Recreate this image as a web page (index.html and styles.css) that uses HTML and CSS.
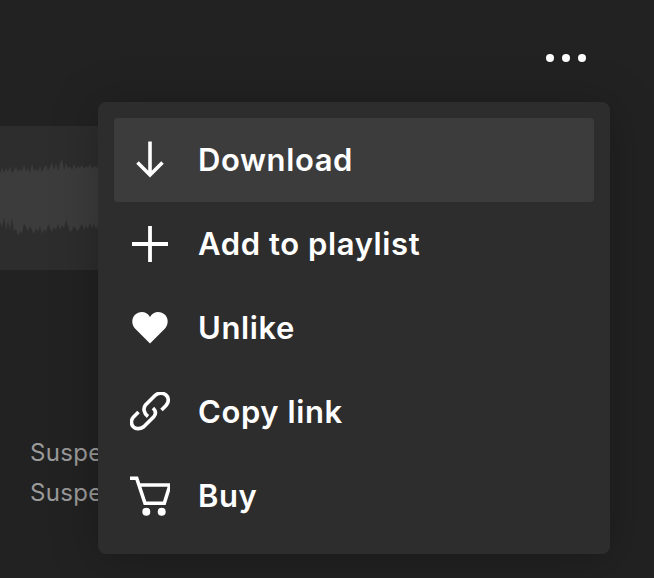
FILE: index.html
```html
<!DOCTYPE html>
<html lang="en">
<head>
<meta charset="utf-8">
<title>Track menu</title>
<link rel="stylesheet" href="styles.css">
</head>
<body>
<main class="page">
  <div class="toolbar">
    <button class="more" aria-label="More"><i class="dot"></i><i class="dot"></i><i class="dot"></i></button>
  </div>
  <div class="wave">
    <svg class="wave-svg" width="120" height="144" viewBox="0 0 120 144">
      <path fill="#3c3c3c" d="M0 48 L2 41 L4 47 L6 42 L8 46 L10 40 L12 47 L14 44 L16 41 L18 46 L20 43 L22 45 L24 39 L26 46 L28 42 L30 47 L32 38 L34 45 L36 43 L38 46 L40 40 L42 46 L44 42 L46 39 L48 45 L50 41 L52 36 L54 44 L56 37 L58 45 L60 38 L62 33 L64 44 L66 37 L68 42 L70 40 L72 44 L74 38 L76 43 L78 40 L80 42 L82 39 L84 43 L86 40 L88 42 L90 38 L92 43 L94 40 L98 42 L120 42 L120 100 L98 100 L96 103 L94 98 L92 102 L90 97 L88 103 L86 100 L84 104 L82 98 L80 101 L78 105 L76 103 L74 100 L72 104 L70 106 L68 100 L66 94 L64 102 L62 99 L60 104 L58 98 L56 104 L54 101 L52 106 L50 102 L48 98 L46 106 L44 103 L42 108 L40 100 L38 106 L36 102 L34 108 L32 104 L30 100 L28 105 L26 101 L24 97 L22 108 L20 105 L18 110 L16 103 L14 105 L12 92 L10 104 L8 95 L6 104 L4 91 L2 101 L0 96 Z"/>
    </svg>
  </div>
  <div class="meta">
    <p class="meta-line">Suspense</p>
    <p class="meta-line">Suspense</p>
  </div>
  <ul class="menu">
    <li class="item active">
      <svg class="icon" viewBox="0 0 40 40"><path d="M20 1.500V35M7.500 22.500 20 35 32.500 22.500" fill="none" stroke="#fff" stroke-width="3.600"/></svg>
      <span class="label">Download</span>
    </li>
    <li class="item">
      <svg class="icon" viewBox="0 0 40 40"><path d="M20 2V38M2 20H38" fill="none" stroke="#fff" stroke-width="3.800"/></svg>
      <span class="label">Add to playlist</span>
    </li>
    <li class="item">
      <svg class="icon" viewBox="0 0 40 40"><path d="M20 35.500 L5 20.500 C1 16 1.500 9 6 6 C10.500 2.500 17 3.500 20 9 C23 3.500 29.500 2.500 34 6 C38.500 9 39 16 35 20.500 Z" fill="#fff"/></svg>
      <span class="label">Unlike</span>
    </li>
    <li class="item">
      <svg class="icon" viewBox="0 0 40 40"><path d="M31.500 18 L36 13.500 C39.500 9.500 38.500 5 36 3 C33 .5 28 .5 25 3.500 L15.500 13 C13 16 13.500 21 18 24.500M23 16 C26 19 26 22 24 24.500 L14 34.500 C11 37 6 37.500 3.500 35 C.5 32 1 27.500 3.500 25 L8.500 20" fill="none" stroke="#fff" stroke-width="3.600"/></svg>
      <span class="label">Copy link</span>
    </li>
    <li class="item">
      <svg class="icon" viewBox="0 0 40 40"><path d="M0 2.300H6.700L15 27.300H34.300L40 9H10" fill="none" stroke="#fff" stroke-width="3.600"/><circle cx="16.300" cy="35.700" r="4" fill="#fff"/><circle cx="31.700" cy="35.700" r="4" fill="#fff"/></svg>
      <span class="label">Buy</span>
    </li>
  </ul>
</main>
</body>
</html>
```
FILE: styles.css
```css
* { box-sizing: border-box; }
html, body { margin: 0; height: 100%; }
body {
  background: #222222;
  font-family: Inter, "Liberation Sans", sans-serif;
  overflow: hidden;
}
.page {
  position: relative;
  width: 654px;
  height: 578px;
  overflow: hidden;
  display: flex;
  flex-direction: column;
}
.toolbar {
  display: flex;
  justify-content: flex-end;
  padding: 54px 68px 0 0;
}
.more {
  display: flex;
  gap: 8px;
  padding: 0;
  border: 0;
  background: none;
}
.dot {
  display: block;
  width: 8px;
  height: 8px;
  border-radius: 50%;
  background: #fff;
}
.wave {
  margin-top: 64px;
  width: 300px;
  height: 144px;
  background: #2d2d2d;
}
.wave-svg {
  display: block;
  filter: blur(0.6px);
}
.meta {
  margin-top: 163px;
  padding-left: 30px;
}
.meta-line {
  margin: 0;
  font-size: 24px;
  line-height: 40px;
  letter-spacing: 0.3px;
  color: #9a9a9a;
}
.menu {
  position: absolute;
  left: 98px;
  top: 102px;
  width: 512px;
  height: 452px;
  margin: 0;
  padding: 16px;
  list-style: none;
  background: #2d2d2d;
  border-radius: 8px;
  box-shadow: 0 4px 48px rgba(0, 0, 0, 0.25);
}
.item {
  display: flex;
  align-items: center;
  gap: 28px;
  height: 84px;
  padding-left: 16px;
  border-radius: 4px;
  color: #fff;
  font-size: 31px;
  font-weight: 600;
  letter-spacing: 0.6px;
}
.item.active { background: #3c3c3c; }
.label { margin-bottom: 1px; }
.icon {
  display: block;
  width: 40px;
  height: 40px;
  flex: none;
}
```
